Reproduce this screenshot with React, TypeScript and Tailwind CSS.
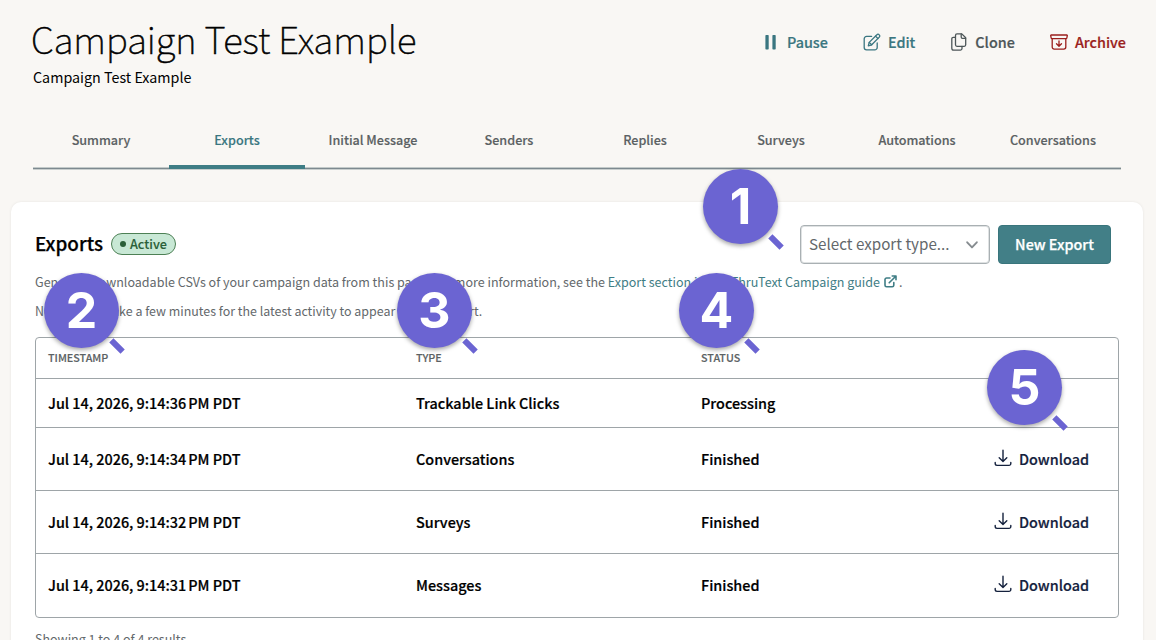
const tabs = ["Summary", "Exports", "Initial Message", "Senders", "Replies", "Surveys", "Automations", "Conversations"];

const rows = [
  { time: "Jul 14, 2026, 9:14:36", type: "Trackable Link Clicks", status: "Processing", done: false },
  { time: "Jul 14, 2026, 9:14:34", type: "Conversations", status: "Finished", done: true },
  { time: "Jul 14, 2026, 9:14:32", type: "Surveys", status: "Finished", done: true },
  { time: "Jul 14, 2026, 9:14:31", type: "Messages", status: "Finished", done: true },
];

const markers = [
  { n: 1, pos: "left-[703px] top-[169px]" },
  { n: 2, pos: "left-[44px] top-[273px]" },
  { n: 3, pos: "left-[397px] top-[273px]" },
  { n: 4, pos: "left-[679px] top-[273px]" },
  { n: 5, pos: "left-[987px] top-[350px]" },
];

const stroke = {
  fill: "none",
  stroke: "currentColor",
  strokeLinecap: "round" as const,
  strokeLinejoin: "round" as const,
};

function PauseIcon() {
  return (
    <svg className="h-[18px] w-[14px]" viewBox="0 0 14 18" fill="currentColor">
      <rect x="1.4" y="2" width="3.3" height="14.4" rx="0.7" />
      <rect x="8.4" y="2" width="3.3" height="14.4" rx="0.7" />
    </svg>
  );
}

function EditIcon() {
  return (
    <svg className="size-[18px]" viewBox="0 0 18 18" strokeWidth="1.3" {...stroke}>
      <path d="M8.6 3.4H3.6A2.4 2.4 0 0 0 1.2 5.8v8.6a2.4 2.4 0 0 0 2.4 2.4h8.2a2.4 2.4 0 0 0 2.4-2.4V10" />
      <path d="M5.3 12.9l.9-3.5 7.7-7.7a1.5 1.5 0 0 1 2.2 0l.2.2a1.5 1.5 0 0 1 0 2.2l-7.6 7.7z" />
      <path d="M12.5 3.1l2.4 2.4M6.2 9.4l2.5 2.4" />
    </svg>
  );
}

function CloneIcon() {
  return (
    <svg className="size-[18px]" viewBox="0 0 18 18" strokeWidth="1.3" {...stroke}>
      <path d="M7 .9h4.8l3.9 3.9v7a1.5 1.5 0 0 1-1.5 1.5H7a1.5 1.5 0 0 1-1.5-1.5V2.4A1.5 1.5 0 0 1 7 .9z" />
      <path d="M11.2 1v3.1a1.2 1.2 0 0 0 1.2 1.2h3.2" />
      <path d="M5.4 4.3H3.3a1.5 1.5 0 0 0-1.5 1.5v9.4a1.9 1.9 0 0 0 1.9 1.9h6.8a1.5 1.5 0 0 0 1.5-1.5v-2.2" />
    </svg>
  );
}

function ArchiveIcon() {
  return (
    <svg className="size-[18px]" viewBox="0 0 18 18" strokeWidth="1.3" {...stroke}>
      <path d="M1.2 2h15.6a.5.5 0 0 1 .5.6l-.5 2.5a.8.8 0 0 1-.8.6H2a.8.8 0 0 1-.8-.6L.7 2.6a.5.5 0 0 1 .5-.6z" />
      <path d="M2.2 5.8v8.3a2 2 0 0 0 2 2h9.6a2 2 0 0 0 2-2V5.8" />
      <path d="M9 7.9v5.2M6.5 10.8L9 13.2l2.5-2.4" />
    </svg>
  );
}

function ExternalIcon() {
  return (
    <svg className="size-[13px] -translate-y-px" viewBox="0 0 13 13" strokeWidth="1.6" {...stroke}>
      <path d="M6 3H2.6A1.6 1.6 0 0 0 1 4.6v5.6a1.6 1.6 0 0 0 1.6 1.6h5.6a1.6 1.6 0 0 0 1.6-1.6V7.5" />
      <path d="M8.2 1h3.8v3.8M11.8 1.2L5.2 7.8" />
    </svg>
  );
}

function DownloadIcon() {
  return (
    <svg className="size-[18px]" viewBox="0 0 18 18" strokeWidth="1.4" {...stroke}>
      <path d="M9 1.2v11M5.2 8.8L9 12.4l3.8-3.6" />
      <path d="M1.2 13.4v1.2a1.8 1.8 0 0 0 1.8 1.8h12a1.8 1.8 0 0 0 1.8-1.8v-1.2" />
    </svg>
  );
}

export default function App() {
  return (
    <div className="relative h-[640px] w-[1156px] overflow-hidden bg-[#f9f7f4] font-['Noto_Sans_CJK_SC','Noto_Sans',sans-serif] text-black">
      <header className="flex h-[129px] items-start justify-between pr-[30px] pl-[31px]">
        <div className="pt-[15px]">
          <h1 className="text-[36.7px] leading-[47px] font-thin whitespace-nowrap [-webkit-text-stroke:0.6px]">Campaign Test Example</h1>
          <p className="mt-[5px] pl-0.5 text-[14.3px] leading-5">Campaign Test Example</p>
        </div>
        <div className="flex items-center pt-8 text-[14.4px] leading-5 font-medium [-webkit-text-stroke:0.2px]">
          <span className="flex items-center gap-[9px] text-[#3a7680]"><PauseIcon />Pause</span>
          <span className="ml-[35px] flex items-center gap-[7px] text-[#3a7680]"><EditIcon />Edit</span>
          <span className="ml-[35px] flex items-center gap-[7px] text-[#4d5658]"><CloneIcon />Clone</span>
          <span className="ml-[35px] flex items-center gap-[7px] text-[#9b1f1d]"><ArchiveIcon />Archive</span>
        </div>
      </header>

      <nav className="ml-[33px] grid h-10 w-[1088px] grid-cols-8 border-b border-[#7d898f] text-center text-[12.6px] leading-[22px] font-medium text-[#5b6163] shadow-[0_1px_0_#c9cfce] [-webkit-text-stroke:0.15px]">
        {tabs.map((t) => (
          <div
            key={t}
            className={
              t === "Exports"
                ? "-mb-px border-b-4 border-[#3f7d85] text-[#3a7680]"
                : "shadow-[inset_0_-1px_0_#c3cac9]"
            }
          >
            {t}
          </div>
        ))}
      </nav>

      <main className="mt-[33px] ml-[11px] h-[500px] w-[1132px] rounded-[10px] bg-white pl-6 shadow-[0_0_3px_rgba(0,0,0,0.08)]">
        <div className="flex h-[62px] items-start justify-between pt-[23px] pr-8">
          <div className="flex items-center pt-2">
            <h2 className="-mt-0.5 text-[18.85px] leading-6 font-medium [-webkit-text-stroke:0.25px]">Exports</h2>
            <span className="ml-2 flex h-[22px] items-center gap-1 rounded-full border border-[#4d8055] bg-[#c8e8d5] pr-2 pl-2 text-[12.7px] leading-5 font-medium text-[#2b5f38] [-webkit-text-stroke:0.1px]">
              <i className="size-[6px] rounded-full bg-[#2b5f38]" />
              Active
            </span>
          </div>
          <div className="flex gap-2">
            <div className="flex h-[39px] w-[190px] items-center justify-between rounded border border-[#a9b0b3] pr-[11px] pl-2 text-[15.2px] text-[#63686b] shadow-[inset_0_0_0_1px_#dfe2e3]">
              <span className="-mt-0.5">Select export type...</span>
              <svg className="h-2 w-3" viewBox="0 0 12 8" strokeWidth="1.9" {...stroke} stroke="#868c90">
                <path d="M1.2 1.3L6 6.4l4.8-5.1" />
              </svg>
            </div>
            <button className="h-[39px] w-[113px] rounded border border-[#39757c] bg-[#427f87] pb-0.5 text-[14.35px] font-medium text-white [-webkit-text-stroke:0.25px]">
              New Export
            </button>
          </div>
        </div>

        <p className="mt-2 flex h-5 items-center text-[12.54px] leading-5 whitespace-pre text-[#63686b]">
          Generate downloadable CSVs of your campaign data from this page. For more information, see the{" "}
          <a className="flex items-center gap-1 text-[#3f7d85]">
            Export section in our ThruText Campaign guide
            <ExternalIcon />
          </a>
          <span className="ml-0.5">.</span>
        </p>
        <p className="mt-[9px] text-[12.43px] leading-5 text-[#63686b]">
          Note: It may take a few minutes for the latest activity to appear in your export.
        </p>

        <div className="mt-4 h-[281px] w-[1084px] rounded border border-[#9ea5a8]">
          <div className="grid h-10 grid-cols-[368px_285px_1fr] items-center pl-3 text-[10.75px] font-medium text-[#5b6163] [-webkit-text-stroke:0.15px]">
            <span>TIMESTAMP</span>
            <span>TYPE</span>
            <span>STATUS</span>
          </div>
          {rows.map((r) => (
            <div
              key={r.time}
              className={
                "grid grid-cols-[368px_285px_293px_1fr] items-center border-t border-[#9ea5a8] pb-px pl-3 text-[14.4px] font-medium [-webkit-text-stroke:0.2px] " +
                (r.done ? "h-[63px]" : "h-[49px]")
              }
            >
              <span>
                {r.time}
                <span className="ml-[2px]">PM PDT</span>
              </span>
              <span>{r.type}</span>
              <span>{r.status}</span>
              {r.done && (
                <span className="flex items-center gap-[7px] text-[#14213d]">
                  <DownloadIcon />
                  Download
                </span>
              )}
            </div>
          ))}
        </div>
        <p className="mt-[11px] text-[12.53px] leading-5 text-[#63686b]">Showing 1 to 4 of 4 results</p>
      </main>

      {markers.map((m) => (
        <div
          key={m.n}
          className={
            "absolute flex size-[75px] items-center justify-center rounded-full bg-[#6b64d2] pb-px font-['Inter'] text-[50px] leading-none font-bold text-white shadow-[0_2px_4px_rgba(0,0,0,0.35)] " +
            m.pos
          }
        >
          {m.n}
          <i className="absolute top-[70px] left-[65px] h-[6px] w-4 rotate-45 bg-[#6b64d2]" />
        </div>
      ))}
    </div>
  );
}
